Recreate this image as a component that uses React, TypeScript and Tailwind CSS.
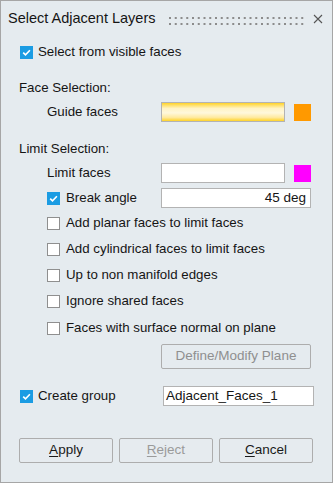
import React from "react";

const Check = ({ checked }: { checked?: boolean }) =>
  checked ? (
    <span className="w-[13px] h-[13px] bg-[#1b9ce3] flex items-center justify-center shrink-0">
      <svg width="13" height="13" viewBox="0 0 13 13">
        <path d="M3.2 6.6l2.3 2.3 4.4-4.7" fill="none" stroke="#fff" strokeWidth="1.6" />
      </svg>
    </span>
  ) : (
    <span className="w-[13px] h-[13px] bg-white border border-[#8f8f8f] shrink-0" />
  );

const CheckRow = ({ label, mt }: { label: string; mt: string }) => (
  <div className={`h-[20px] flex items-center pl-[46px] ${mt}`}>
    <Check />
    <span className="ml-[6px]">{label}</span>
  </div>
);

const Dots = () => (
  <svg width="136" height="8" viewBox="0 0 136 8">
    {Array.from({ length: 24 }).map((_, i) => (
      <g key={i} fill="#8c8c8c">
        <rect x={i * 5.75} y={0} width={2} height={2} />
        <rect x={i * 5.75} y={6} width={2} height={2} />
      </g>
    ))}
  </svg>
);

const Btn = ({ k, rest, disabled }: { k: string; rest: string; disabled?: boolean }) => (
  <button
    className={`w-[94px] h-[25px] border border-[#adadad] rounded-[2px] bg-[#e6ebef] text-[13.5px] ${
      disabled ? "text-[#9a9a9a]" : "text-[#1a1a1a]"
    }`}
  >
    <span className="underline underline-offset-[2px]">{k}</span>
    {rest}
  </button>
);

export default function App() {
  return (
    <div className="w-[333px] h-[483px] bg-[#e5ebef] border border-[#a6a6a6] flex flex-col text-[13.3px] text-[#151515] font-['Liberation_Sans',Arial,sans-serif]">
      <div className="h-[36px] flex items-center pl-[7px] pr-[9px]">
        <span className="text-[14.5px]">Select Adjacent Layers</span>
        <span className="ml-auto mt-[3px]">
          <Dots />
        </span>
        <svg className="ml-[8px]" width="10" height="10" viewBox="0 0 10 10">
          <path d="M1 1l8 8M9 1l-8 8" stroke="#555" strokeWidth="1.1" />
        </svg>
      </div>

      <div className="h-[20px] mt-[5px] flex items-center pl-[19px]">
        <Check checked />
        <span className="ml-[5px]">Select from visible faces</span>
      </div>

      <div className="h-[20px] mt-[16px] flex items-center pl-[18px]">Face Selection:</div>

      <div className="h-[20px] mt-[4px] flex items-center pl-[46px]">
        <span className="w-[114px]">Guide faces</span>
        <div className="w-[124px] h-[20px] border border-[#b3b3b3] bg-[linear-gradient(to_bottom,#ffd32a_0%,#fff3c4_30%,#fff8dc_55%,#ffeaa0_80%,#ffd329_100%)]" />
        <div className="w-[17px] h-[17px] ml-[9px] bg-[#ff9900]" />
      </div>

      <div className="h-[20px] mt-[17px] flex items-center pl-[18px]">Limit Selection:</div>

      <div className="h-[20px] mt-[4px] flex items-center pl-[46px]">
        <span className="w-[114px]">Limit faces</span>
        <div className="w-[124px] h-[20px] border border-[#b3b3b3] bg-white" />
        <div className="w-[17px] h-[17px] ml-[9px] bg-[#ff00ff]" />
      </div>

      <div className="h-[20px] mt-[5px] flex items-center pl-[46px]">
        <Check checked />
        <span className="ml-[6px] w-[95px]">Break angle</span>
        <div className="w-[150px] h-[20px] border border-[#b3b3b3] bg-white flex items-center justify-end pr-[4px] text-[13.5px]">
          45 deg
        </div>
      </div>

      <CheckRow label="Add planar faces to limit faces" mt="mt-[5px]" />
      <CheckRow label="Add cylindrical faces to limit faces" mt="mt-[6px]" />
      <CheckRow label="Up to non manifold edges" mt="mt-[6px]" />
      <CheckRow label="Ignore shared faces" mt="mt-[6px]" />
      <CheckRow label="Faces with surface normal on plane" mt="mt-[7px]" />

      <div className="mt-[6px] pl-[160px]">
        <button className="w-[150px] h-[25px] border border-[#adadad] rounded-[2px] text-[#8f8f8f] text-[13.5px]">
          Define/Modify Plane
        </button>
      </div>

      <div className="h-[20px] mt-[17px] flex items-center pl-[19px]">
        <Check checked />
        <span className="ml-[5px] w-[125px]">Create group</span>
        <div className="w-[151px] h-[20px] border border-[#b3b3b3] bg-white flex items-center pl-[2px] text-[13.5px]">
          Adjacent_Faces_1
        </div>
      </div>

      <div className="mt-[32px] flex gap-[6px] pl-[18px]">
        <Btn k="A" rest="pply" />
        <Btn k="R" rest="eject" disabled />
        <Btn k="C" rest="ancel" />
      </div>
    </div>
  );
}
